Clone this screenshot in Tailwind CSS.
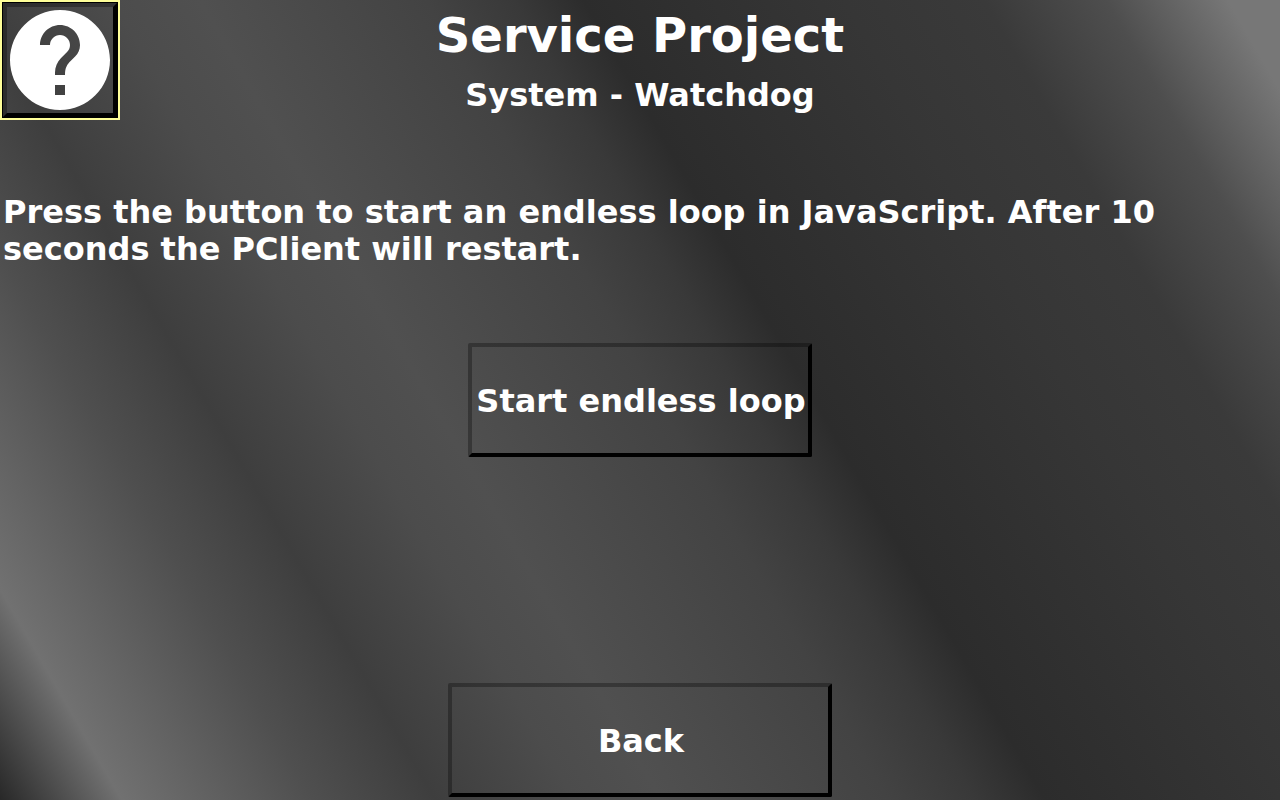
<!DOCTYPE html>
<html lang="en">
<head>
  <meta charset="UTF-8" />
  <meta name="viewport" content="width=device-width, initial-scale=1.0"/>
  <title>Service Project</title>
  <script src="https://cdn.jsdelivr.net/npm/@tailwindcss/browser@4"></script>
</head>
<body class="min-h-screen flex flex-col text-white font-bold font-['DejaVu_Sans',sans-serif] text-[32px] leading-[37px] bg-[linear-gradient(60deg,#282828_0%,#717171_7%,#4f4f4f_18%,#3e3e3e_25%,#4c4c4c_33%,#505050_38%,#4b4b4b_43%,#434343_51%,#393939_56%,#2c2c2c_60%,#363636_75%,#3a3a3a_83%,#4e4e4e_90%,#777777_97%,#777777_100%)]">
  <header class="grid grid-cols-[120px_1fr_120px]">
    <button id="helpBtn" aria-label="Help" class="m-[3px] h-[114px] w-[114px] flex items-center justify-center border-4 border-t-black/30 border-l-black/30 border-r-black border-b-black shadow-[0_0_0_1px_#000,0_0_0_3px_#ffff99]">
      <svg class="w-[120px] h-[120px] shrink-0" viewBox="0 0 24 24" fill="currentColor">
        <path d="M12 2C6.48 2 2 6.48 2 12s4.480 10 10 10 10-4.480 10-10S17.520 2 12 2zm1 17h-2v-2h2v2zm2.070-7.750l-.9.920C13.450 12.900 13 13.500 13 15h-2v-.5c0-1.100.45-2.100 1.170-2.830l1.240-1.260c.37-.36.59-.86.59-1.410 0-1.100-.9-2-2-2s-2 .9-2 2H8c0-2.210 1.790-4 4-4s4 1.790 4 4c0 .88-.36 1.680-.93 2.250z"/>
      </svg>
    </button>
    <div class="pt-[7px] text-center">
      <h1 class="text-[48px] leading-14">Service Project</h1>
      <h2 class="mt-[14px]">System - Watchdog</h2>
    </div>
  </header>

  <main class="flex flex-col">
    <p class="mt-[74px] px-[3px]">Press the button to start an endless loop in JavaScript. After 10 seconds the PClient will restart.</p>
    <button id="startBtn" class="mt-[75px] mx-auto w-[344px] h-[114px] pt-[2px] pl-[2px] whitespace-nowrap border-4 border-t-black/30 border-l-black/30 border-r-black border-b-black rounded-xs">Start endless loop</button>
  </main>

  <footer class="mt-auto mb-[3px] flex justify-center">
    <button id="backBtn" class="w-[384px] h-[114px] pt-[2px] pl-[2px] border-4 border-t-black/30 border-l-black/30 border-r-black border-b-black rounded-xs">Back</button>
  </footer>

  <script>
    document.getElementById("startBtn").addEventListener("click", () => {
      while (true) {}
    });

    document.getElementById("backBtn").addEventListener("click", () => history.back());
  </script>
</body>
</html>
